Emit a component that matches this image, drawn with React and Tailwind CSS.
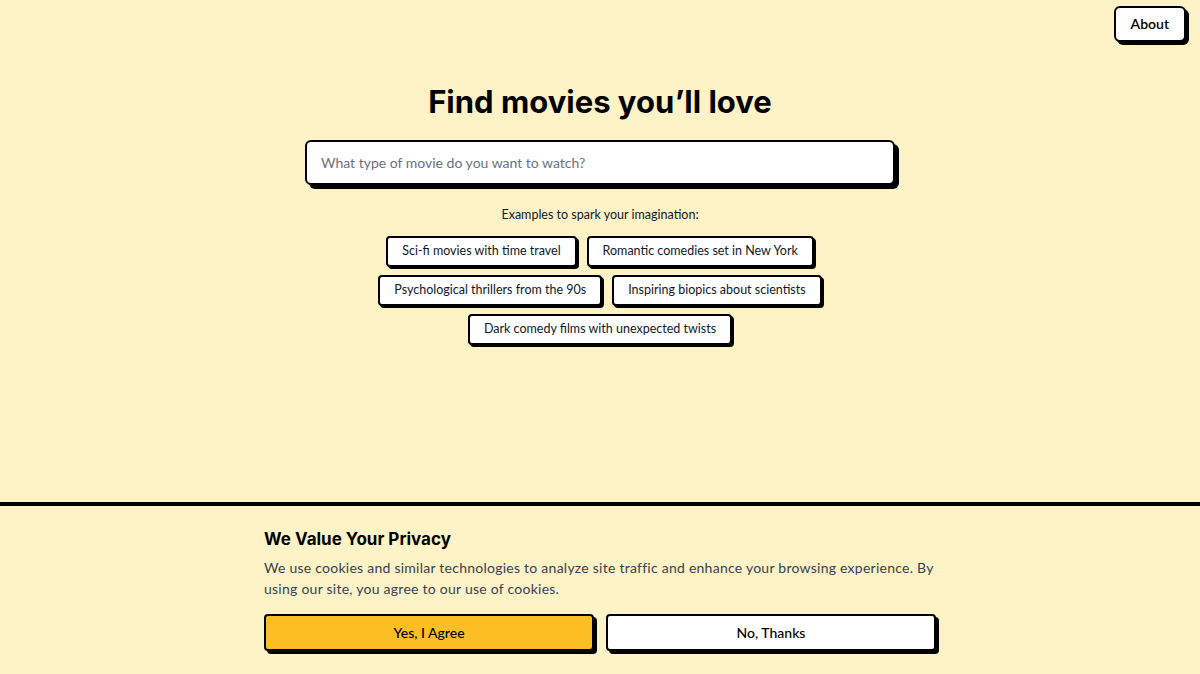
import React, { useState } from "react";

const examples = [
  "Sci-fi movies with time travel",
  "Romantic comedies set in New York",
  "Psychological thrillers from the 90s",
  "Inspiring biopics about scientists",
  "Dark comedy films with unexpected twists",
];

const App = () => {
  const [query, setQuery] = useState("");
  const [showBanner, setShowBanner] = useState(true);

  return (
    <div
      className="relative h-screen flex flex-col bg-[#fef3c7] text-black overflow-hidden"
      style={{ fontFamily: "Lato, 'Noto Sans', sans-serif" }}
    >
      {/* Top-right nav */}
      <button className="absolute top-1.5 right-[14px] h-9 px-[15px] bg-white border-2 border-black rounded-md shadow-[3px_3px_0_0_#000] text-sm font-semibold">
        About
      </button>

      {/* Search */}
      <main className="flex-1 flex flex-col items-center pt-[82px]">
        <h1
          className="text-[31px] leading-[40px] font-bold"
          style={{ fontFamily: "Inter, 'DejaVu Sans', sans-serif" }}
        >
          Find movies you’ll love
        </h1>
        <input
          value={query}
          onChange={(e) => setQuery(e.target.value)}
          placeholder="What type of movie do you want to watch?"
          className="mt-[18px] w-[590px] h-[45px] px-[14px] bg-white border-2 border-black rounded-md shadow-[4px_4px_0_0_#000] text-sm placeholder:text-gray-500 focus:outline-none"
        />
        <p className="mt-[21px] text-[12.5px] text-gray-900">
          Examples to spark your imagination:
        </p>
        <div className="mt-[11px] w-[460px] flex flex-wrap justify-center gap-x-[10px] gap-y-[8px]">
          {examples.map((ex) => (
            <button
              key={ex}
              onClick={() => setQuery(ex)}
              className="h-[31px] px-[14px] bg-white border-2 border-black rounded-[4px] shadow-[2px_2px_0_0_#000] text-[12.5px] text-gray-900"
            >
              {ex}
            </button>
          ))}
        </div>
      </main>

      {/* Cookie consent */}
      {showBanner && (
        <footer className="border-t-4 border-black bg-[#fef3c7] pt-[19px] pb-[23px]">
          <div className="w-[672px] mx-auto">
            <h2
              className="text-[17px] leading-7 font-bold"
              style={{ fontFamily: "Inter, 'DejaVu Sans', sans-serif" }}
            >
              We Value Your Privacy
            </h2>
            <p className="mt-[4px] text-sm leading-[21px] text-gray-700 tracking-[0.25px]">
              We use cookies and similar technologies to analyze site traffic and enhance your browsing experience. By
              using our site, you agree to our use of cookies.
            </p>
            <div className="mt-[15px] grid grid-cols-2 gap-3">
              <button
                onClick={() => setShowBanner(false)}
                className="h-[37px] bg-[#fbbf24] border-2 border-black rounded-[4px] shadow-[3px_3px_0_0_#000] text-sm font-medium"
              >
                Yes, I Agree
              </button>
              <button
                onClick={() => setShowBanner(false)}
                className="h-[37px] bg-white border-2 border-black rounded-[4px] shadow-[3px_3px_0_0_#000] text-sm font-medium"
              >
                No, Thanks
              </button>
            </div>
          </div>
        </footer>
      )}
    </div>
  );
};

export default App;
